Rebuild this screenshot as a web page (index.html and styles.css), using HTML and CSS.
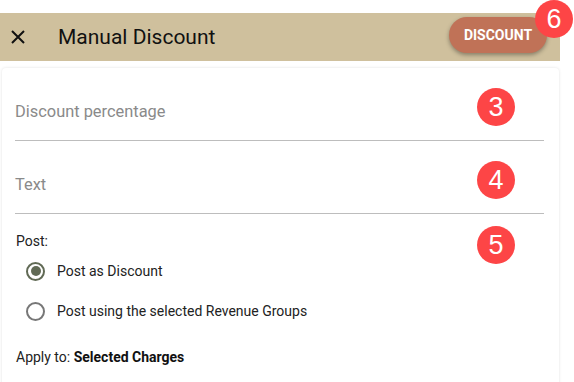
FILE: index.html
```html
<!DOCTYPE html>
<html>
<head>
<meta charset="utf-8">
<link rel="stylesheet" href="styles.css">
</head>
<body>
<div class="page">
  <header class="header">
    <span class="close">
      <svg width="14" height="14" viewBox="0 0 14 14"><path d="M1 1L13 13M13 1L1 13" stroke="#111" stroke-width="2"/></svg>
    </span>
    <h1 class="title">Manual Discount</h1>
    <button class="btn">DISCOUNT</button>
  </header>
  <span class="badge badge-6">6</span>
  <main class="card">
    <div class="field"><span class="placeholder">Discount percentage</span><span class="badge badge-in">3</span></div>
    <div class="field"><span class="placeholder">Text</span><span class="badge badge-in">4</span></div>
    <div class="post">
      <div class="post-label">Post:</div>
      <span class="badge badge-5">5</span>
      <div class="radio-row"><span class="radio checked"></span><span>Post as Discount</span></div>
      <div class="radio-row"><span class="radio"></span><span>Post using the selected Revenue Groups</span></div>
      <div class="apply">Apply to: <b>Selected Charges</b></div>
    </div>
  </main>
</div>
</body>
</html>
```
FILE: styles.css
```css
* { box-sizing: border-box; }
html, body { margin: 0; background: #fff; }
body { font-family: Roboto, "Noto Sans", sans-serif; color: #222; }
.page { position: relative; width: 574px; height: 382px; padding-top: 13px; overflow: hidden; }
.header {
  width: 560px; height: 48px; background: #cfc09d;
  display: flex; align-items: center; padding-left: 11px; padding-right: 13px;
}
.close { display: flex; width: 14px; height: 14px; }
.title { margin: 0 0 0 33px; font-size: 21px; font-weight: 400; color: #111; flex: 1; }
.btn {
  width: 98px; height: 36px; border: none; border-radius: 18px;
  background: #c07257; color: #fff; font-family: Roboto, sans-serif;
  font-size: 14px; font-weight: 700; letter-spacing: 0; margin-top: -4px; padding: 0;
  box-shadow: 0 2px 4px rgba(0,0,0,0.35);
}
.badge {
  position: absolute; width: 38px; height: 38px; border-radius: 50%;
  background: #fd4546; color: #fff; font-family: "Liberation Sans", Arial, sans-serif;
  font-size: 27px; display: flex; align-items: center; justify-content: center;
}
.badge-6 { left: 535px; top: 0; }
.card {
  margin: 7px 15px 0 2px; background: #fff; border-radius: 4px;
  box-shadow: 0 0 3px rgba(0,0,0,0.12); height: 330px; padding-top: 0;
}
.field {
  position: relative; height: 73px; margin: 0 15px 0 13px;
  border-bottom: 1px solid #bdbdbd; display: flex; align-items: flex-end;
  padding-bottom: 19px;
}
.placeholder { font-size: 16.4px; line-height: 19px; color: #8a8a8a; }
.badge-in { left: 462px; top: 20px; }
.post { position: relative; padding: 19px 0 0 14px; font-size: 14px; line-height: 16px; color: #222; }
.badge-5 { left: 475px; top: 12px; }
.radio-row { display: flex; align-items: center; height: 40px; padding-left: 10px; margin-top: 2px; }
.radio-row + .radio-row { margin-top: 0; }
.radio {
  width: 19px; height: 19px; border-radius: 50%; border: 2px solid #777;
  margin-right: 12px; display: flex; align-items: center; justify-content: center;
}
.radio.checked { border-color: #616a55; }
.radio.checked::after { content: ""; width: 10px; height: 10px; border-radius: 50%; background: #616a55; }
.apply { margin-top: 18px; }
.apply b { font-weight: 700; color: #111; }
```
